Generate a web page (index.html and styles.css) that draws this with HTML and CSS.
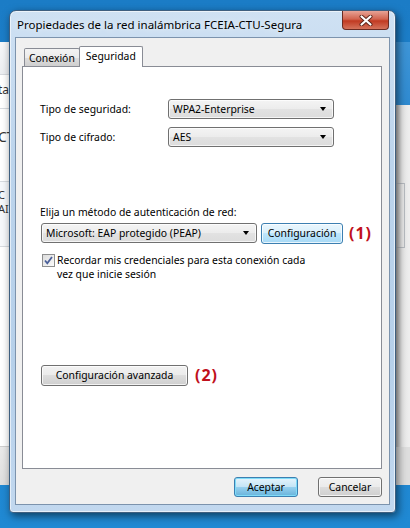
FILE: index.html
```html
<!DOCTYPE html>
<html lang="es">
<head>
    <meta charset="UTF-8">
    <title>Propiedades de la red inalámbrica</title>
    <link rel="stylesheet" href="styles.css">
</head>
<body>

<div class="desktop">

    <!-- Window behind the dialog -->
    <div class="bg-window">
        <div class="bg-head"></div>
        <div class="bg-row row-a"><span>ta</span></div>
        <div class="bg-row row-b"><span class="big">CT</span></div>
        <div class="bg-row row-c"><span>C</span><span>AI</span></div>
        <div class="bg-fill"></div>
        <div class="bg-status"></div>
    </div>
    <div class="bg-window side">
        <div class="side-head"></div>
        <div class="side-body"><div class="side-box"></div></div>
        <div class="side-status"></div>
    </div>

    <!-- Dialog -->
    <div class="dialog">
        <div class="titlebar">
            <span class="title">Propiedades de la red inalámbrica FCEIA-CTU-Segura</span>
            <span class="close">
                <svg width="14" height="11" viewBox="0 0 14 11">
                    <path d="M2.5 1.5 L11.5 9.5 M11.5 1.5 L2.5 9.5" stroke="#5b2318" stroke-width="4" stroke-linecap="round"/>
                    <path d="M2.5 1.5 L11.5 9.5 M11.5 1.5 L2.5 9.5" stroke="#fff" stroke-width="2.2" stroke-linecap="round"/>
                </svg>
            </span>
        </div>

        <div class="client">
            <div class="tabs">
                <span class="tab">Conexión</span>
                <span class="tab active">Seguridad</span>
            </div>

            <div class="panel">
                <div class="fields">
                    <label>Tipo de seguridad:</label>
                    <div class="combo">WPA2-Enterprise<i class="arrow"></i></div>
                    <label>Tipo de cifrado:</label>
                    <div class="combo">AES<i class="arrow"></i></div>
                </div>

                <!-- Authentication method -->
                <p class="auth-label">Elija un método de autenticación de red:</p>
                <div class="auth-row">
                    <div class="combo wide">Microsoft: EAP protegido (PEAP)<i class="arrow"></i></div>
                    <button class="btn hot config">Configuración</button>
                    <span class="note">(1)</span>
                </div>
                <div class="check-row">
                    <span class="checkbox">
                        <svg width="11" height="11" viewBox="0 0 11 11">
                            <path d="M2 5.5 L4.3 8.3 L9 2" fill="none" stroke="#4a5f99" stroke-width="1.8"/>
                        </svg>
                    </span>
                    <span class="check-text">Recordar mis credenciales para esta conexión cada<br>vez que inicie sesión</span>
                </div>

                <div class="adv-row">
                    <button class="btn advanced">Configuración avanzada</button>
                    <span class="note">(2)</span>
                </div>
            </div>

            <div class="actions">
                <button class="btn default">Aceptar</button>
                <button class="btn">Cancelar</button>
            </div>
        </div>
    </div>

</div>

</body>
</html>
```

FILE: styles.css
```css
/* Windows 7 style dialog */
body {
    margin: 0;
    padding: 0;
    font-family: "Noto Sans", "Open Sans", sans-serif;
    font-size: 10.4px;
    color: #000;
}
.desktop {
    position: relative;
    width: 410px;
    height: 528px;
    overflow: hidden;
    background: linear-gradient(#1b7cc6, #1f84cf 60%, #2089d3);
}

/* window behind */
.bg-window {
    position: absolute;
    left: 0;
    top: 42px;
    width: 396px;
    height: 443px;
    background: #fff;
    display: flex;
    flex-direction: column;
}
.bg-head {
    height: 32px;
    background: linear-gradient(#f7f8fa, #eceef1);
    border-bottom: 1px solid #d6d9de;
}
.bg-row {
    border-bottom: 1px solid #d7dbe0;
    font-size: 12px;
    color: #333;
}
.bg-row span {
    display: block;
    margin-left: -2px;
}
.row-a {
    height: 33px;
    line-height: 30px;
}
.row-b {
    height: 73px;
    padding-top: 18px;
    box-sizing: border-box;
}
.row-b .big {
    font-size: 14px;
}
.row-c {
    height: 65px;
    padding-top: 6px;
    box-sizing: border-box;
    font-size: 11px;
    line-height: 14px;
    background: #f6f8fb;
}
.bg-fill {
    flex: 1;
}
.bg-status {
    height: 38px;
    background: linear-gradient(#eaeaea, #dedede);
    border-top: 1px solid #cfcfcf;
}
.bg-window.side {
    left: 396px;
    width: 14px;
    background: transparent;
}
.side-head {
    height: 63px;
    background: linear-gradient(#3e95d7, #2f8ad0);
}
.side-body {
    flex: 1;
    background: linear-gradient(90deg, #bdbdbd, #e9e9e9 6px, #eeeeee);
    padding-top: 78px;
}
.side-box {
    height: 63px;
    width: 8px;
    border: 1px solid #b8bcc2;
    border-left: none;
}
.side-status {
    height: 38px;
    background: #dedede;
}

/* dialog frame */
.dialog {
    position: absolute;
    left: 9px;
    top: 10px;
    width: 387px;
    height: 503px;
    box-sizing: border-box;
    border: 1px solid #3f5f7f;
    border-radius: 7px 7px 4px 4px;
    background: linear-gradient(#cfe1f3, #bcd4ec 30%, #b6d0ea 70%, #c2d8ef);
    box-shadow: 2px 3px 8px rgba(0, 0, 0, 0.55), inset 0 0 0 1px rgba(255, 255, 255, 0.6);
    padding: 0 5px 7px 5px;
    display: flex;
    flex-direction: column;
}
.titlebar {
    height: 26px;
    display: flex;
    justify-content: space-between;
    align-items: flex-start;
}
.title {
    padding: 7px 0 0 2px;
    font-size: 11.5px;
    line-height: 14px;
    text-shadow: 0 0 6px rgba(255, 255, 255, 0.9);
}
.close {
    width: 47px;
    height: 19px;
    margin-right: 1px;
    box-sizing: border-box;
    border: 1px solid #6b2b22;
    border-top: none;
    border-radius: 0 0 4px 4px;
    background: linear-gradient(#e7a396, #d2644f 45%, #c13a22 55%, #d5735c);
    display: flex;
    align-items: center;
    justify-content: center;
}

/* client area */
.client {
    flex: 1;
    box-sizing: border-box;
    border: 1px solid #7c93ad;
    background: #f0f0f0;
    padding: 8px 7px 7px 6px;
    display: flex;
    flex-direction: column;
}
.tabs {
    height: 20px;
    display: flex;
    align-items: flex-end;
    padding-left: 2px;
}
.tab {
    height: 18px;
    box-sizing: border-box;
    padding: 2px 4px 0 4px;
    border: 1px solid #898c95;
    border-bottom: none;
    border-radius: 2px 2px 0 0;
    background: linear-gradient(#f3f3f3, #ebebeb 50%, #dddddd 51%, #cfcfcf);
}
.tab.active {
    height: 21px;
    margin-bottom: -1px;
    padding: 2px 6px 0 6px;
    margin-left: -1px;
    background: #fff;
    position: relative;
    z-index: 1;
}
.panel {
    height: 403px;
    box-sizing: border-box;
    border: 1px solid #898c95;
    background: #fff;
    padding: 32px 0 0 17px;
}

.fields {
    display: grid;
    grid-template-columns: 128px 166px;
    row-gap: 8px;
    align-items: center;
}
.combo {
    height: 20px;
    box-sizing: border-box;
    border: 1px solid #707070;
    border-radius: 3px;
    background: linear-gradient(#f4f4f4, #ececec 50%, #e2e2e2 51%, #dcdcdc);
    box-shadow: inset 0 0 0 1px rgba(255, 255, 255, 0.7);
    padding: 0 0 0 4px;
    line-height: 18px;
    display: flex;
    justify-content: space-between;
    align-items: center;
}
.arrow {
    width: 0;
    height: 0;
    margin-right: 7px;
    border-left: 3.5px solid transparent;
    border-right: 3.5px solid transparent;
    border-top: 4px solid #000;
}

.auth-label {
    margin: 58px 0 0 0;
    line-height: 14px;
}
.auth-row {
    margin-top: 3px;
    display: flex;
    align-items: center;
    gap: 4px;
}
.combo.wide {
    width: 216px;
    margin-left: 1px;
}
.btn {
    font-family: inherit;
    font-size: 10.4px;
    color: #000;
    height: 20px;
    padding: 0;
    box-sizing: border-box;
    border: 1px solid #707070;
    border-radius: 3px;
    background: linear-gradient(#f2f2f2, #ebebeb 49%, #dddddd 50%, #cfcfcf);
    box-shadow: inset 0 0 0 1px rgba(255, 255, 255, 0.75);
}
.btn.hot {
    border-color: #3c7fb1;
    background: linear-gradient(#eaf6fd, #d9f0fc 49%, #bee6fd 50%, #a7d9f5);
}
.btn.default {
    border-color: #3c7fb1;
    background: linear-gradient(#e5f4fc, #c4e5f6 49%, #98d1ef 50%, #68b3db);
    box-shadow: inset 0 0 0 1px #7fdcf8;
}
.config {
    width: 82px;
    height: 21px;
}
.note {
    color: #c0101c;
    font-weight: bold;
    font-size: 16px;
    letter-spacing: 1px;
    margin-left: 2px;
}

.check-row {
    margin-top: 9px;
    margin-left: 2px;
    display: flex;
    align-items: flex-start;
    gap: 2px;
}
.checkbox {
    width: 13px;
    height: 13px;
    margin-top: 1px;
    box-sizing: border-box;
    border: 1px solid #8e8f8f;
    background: linear-gradient(135deg, #dcdcdc, #fbfbfb);
    display: flex;
    align-items: center;
    justify-content: center;
}
.check-text {
    line-height: 14px;
}

.adv-row {
    margin-top: 83px;
    display: flex;
    align-items: center;
    gap: 5px;
}
.advanced {
    width: 147px;
    height: 21px;
    margin-left: 1px;
}

.actions {
    margin-top: 8px;
    display: flex;
    justify-content: flex-end;
    gap: 20px;
}
.actions .btn {
    width: 64px;
}
```
